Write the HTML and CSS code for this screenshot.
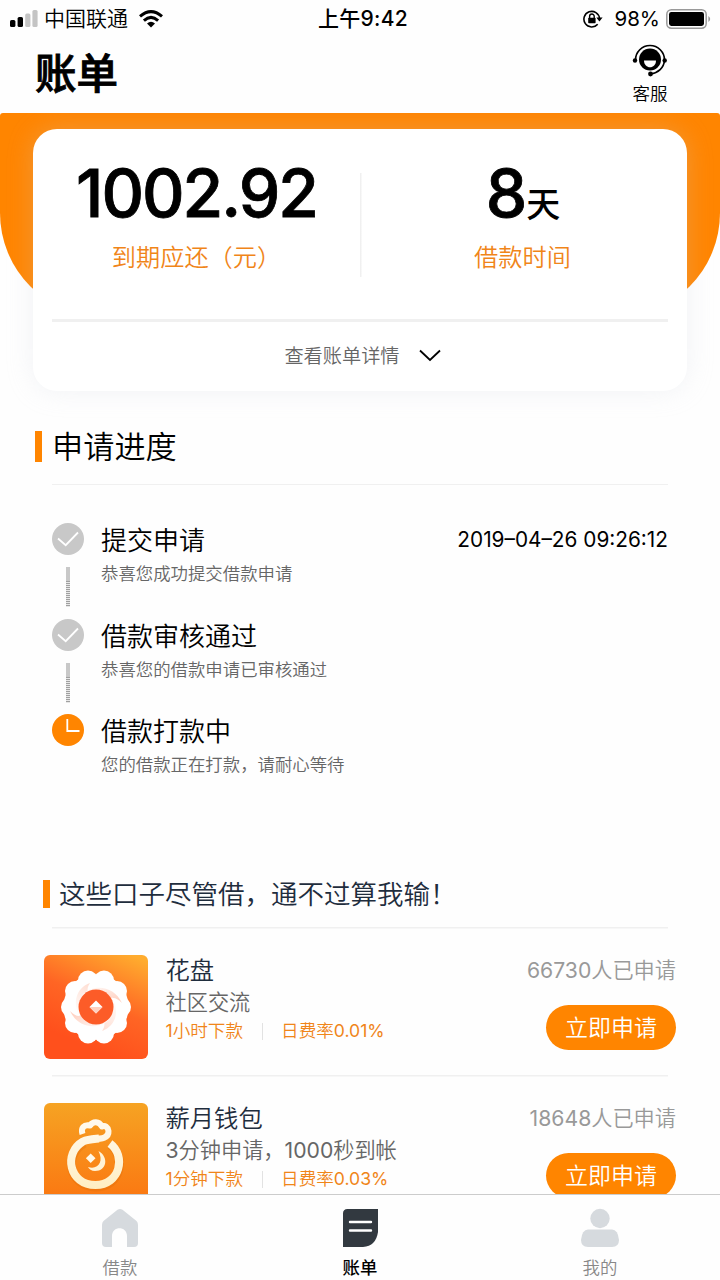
FILE: index.html
```html
<!DOCTYPE html>
<html lang="zh-CN">
<head>
<meta charset="utf-8">
<title>账单</title>
<link rel="stylesheet" href="styles.css">
</head>
<body>
<div class="status">
  <div class="status-left">
    <svg class="signal" width="30" height="18" viewBox="0 0 30 18"><rect x="1" y="10" width="5.4" height="7" rx="1.6"/><rect x="8.6" y="7" width="5.4" height="10" rx="1.6"/><g fill="#c4c4c4"><rect x="16.2" y="3.5" width="5.2" height="13.5" rx="1.6"/><rect x="23.4" y="0" width="5.2" height="17" rx="1.6"/></g></svg>
    <span>中国联通</span>
    <svg class="wifi" width="24" height="18" viewBox="0 0 24 18"><g fill="none" stroke="#000" stroke-width="3"><path d="M1 6.4Q12-3.2 23 6.4"/><path d="M4.9 10.6Q12 4.2 19.1 10.6"/></g><path d="M8 13.4Q12 10 16 13.4L12 17.4Z"/></svg>
  </div>
  <div class="status-time">上午9:42</div>
  <div class="status-right">
    <svg width="20" height="18" viewBox="0 0 20 18"><path d="M14.7 14.2A7.8 7.8 0 1 1 16.5 8.5" fill="none" stroke="#000" stroke-width="1.6"/><path d="M13.3 7.6H19.6L16.4 11.6Z"/><rect x="5.2" y="7.7" width="7.4" height="5.5" rx=".7"/><path d="M6.6 8V6.3a2.3 2.3 0 0 1 4.6 0V8" fill="none" stroke="#000" stroke-width="1.4"/></svg>
    <span class="percent">98%</span>
    <svg width="45" height="20" viewBox="0 0 45 20"><rect x=".8" y=".8" width="39.4" height="18.4" rx="4.6" fill="none" stroke="#999" stroke-width="1.5"/><rect x="3" y="3" width="35" height="14" rx="2.4"/><path d="M42.4 7Q46 10 42.4 13Z" fill="#999"/></svg>
  </div>
</div>
<header class="header">
  <h1>账单</h1>
  <div class="service">
    <svg width="36" height="34" viewBox="0 0 36 34"><path d="M3.5 17A14.5 14.5 0 0 1 32.5 17C32 25 26 30 18.5 31" fill="none" stroke="#000" stroke-width="1.7"/><circle cx="18" cy="16.5" r="11"/><path d="M12 17.5H24C24 26.5 12 26.5 12 17.5Z" fill="#fff"/><circle cx="3" cy="17.5" r="2.2"/><circle cx="32.7" cy="17.5" r="2.2"/><circle cx="18.5" cy="31" r="2.4"/></svg>
    <span>客服</span>
  </div>
</header>
<main class="main">
  <section class="hero">
    <div class="card">
      <div class="figures">
        <div class="figure"><div class="amount">1002.92</div><div class="caption">到期应还（元）</div></div>
        <div class="figure figure-days"><div class="amount days">8<span class="unit">天</span></div><div class="caption">借款时间</div></div>
      </div>
      <div class="details"><span>查看账单详情</span><svg width="22" height="13" viewBox="0 0 22 13"><path d="M1 1.5L11 11L21 1.5" fill="none" stroke="#000" stroke-width="1.8"/></svg></div>
    </div>
  </section>
  <section class="progress">
    <h2>申请进度</h2>
    <ol class="steps">
      <li><div class="mark"><svg width="32" height="32" viewBox="0 0 32 32"><circle cx="16" cy="16" r="16" fill="#c8c8c8"/><path d="M6 15.5L13.7 22.2L26 9.5" fill="none" stroke="#fff" stroke-width="1.8"/></svg><i></i></div><div class="step-text"><h3>提交申请</h3><p>恭喜您成功提交借款申请</p></div><time>2019–04–26 09:26:12</time></li>
      <li><div class="mark"><svg width="32" height="32" viewBox="0 0 32 32"><circle cx="16" cy="16" r="16" fill="#c8c8c8"/><path d="M6 15.5L13.7 22.2L26 9.5" fill="none" stroke="#fff" stroke-width="1.8"/></svg><i></i></div><div class="step-text"><h3>借款审核通过</h3><p>恭喜您的借款申请已审核通过</p></div></li>
      <li><div class="mark"><svg width="32" height="32" viewBox="0 0 32 32"><circle cx="16" cy="16" r="16" fill="#ff8500"/><path d="M15.3 5V17H27.5" fill="none" stroke="#fff" stroke-width="1.8"/></svg></div><div class="step-text"><h3>借款打款中</h3><p>您的借款正在打款，请耐心等待</p></div></li>
    </ol>
  </section>
  <section class="offers">
    <h2 class="offers-title">这些口子尽管借，通不过算我输！</h2>
    <article class="offer">
      <svg class="logo" width="104" height="104" viewBox="0 0 104 104">
        <defs>
          <linearGradient id="sunset" x1=".85" y1="0" x2=".45" y2=".9"><stop stop-color="#ffac2e"/><stop offset=".55" stop-color="#ff6524"/><stop offset="1" stop-color="#ff501c"/></linearGradient>
          <linearGradient id="petal" x1="0" y1="0" x2="1" y2=".6"><stop stop-color="#fff"/><stop offset="1" stop-color="#ffd3c4"/></linearGradient>
          <linearGradient id="fold" x1=".6" y1="0" x2=".4" y2="1"><stop stop-color="#ffe0d5"/><stop offset="1" stop-color="#fff"/></linearGradient>
        </defs>
        <rect width="104" height="104" rx="6" fill="url(#sunset)"/>
        <g fill="#fff"><circle cx="52" cy="52" r="32.7"/><circle cx="60" cy="25.5" r="10"/><circle cx="44" cy="25.5" r="10"/><circle cx="31" cy="36" r="10"/><circle cx="27" cy="52" r="10"/><circle cx="31" cy="68" r="10"/><circle cx="44" cy="78.5" r="10"/><circle cx="60" cy="78.5" r="10"/><circle cx="73" cy="68" r="10"/><circle cx="77" cy="52" r="10"/><circle cx="73" cy="36" r="10"/></g>
        <path d="M36 62C28 48 32 33 46 28C41 35 46 37 42 44Z" fill="url(#fold)"/>
        <path d="M38 40C50 28 70 31 78 48C72 42 68 42 66 45Z" fill="url(#petal)"/>
        <g transform="rotate(180 52 52)"><path d="M36 62C28 48 32 33 46 28C41 35 46 37 42 44Z" fill="url(#fold)"/><path d="M38 40C50 28 70 31 78 48C72 42 68 42 66 45Z" fill="url(#petal)"/></g>
        <circle cx="52" cy="52" r="17.5" fill="#fc5c28"/><path d="M52 45.5L58.5 52L52 58.5L45.5 52Z" fill="#fff"/><path d="M45.5 52H58.5L52 58.5Z" fill="#ffd0c0"/>
      </svg>
      <div class="offer-info"><h3>花盘</h3><p class="desc">社区交流</p><p class="terms"><span>1小时下款</span><i></i><span>日费率0.01%</span></p></div>
      <div class="offer-side"><p>66730人已申请</p><button>立即申请</button></div>
    </article>
    <article class="offer">
      <svg class="logo" width="104" height="104" viewBox="0 0 104 104">
        <defs>
          <linearGradient id="amber" x1="0" y1="0" x2="0" y2="1"><stop stop-color="#f6a323"/><stop offset="1" stop-color="#fb7410"/></linearGradient>
          <linearGradient id="cream" gradientUnits="userSpaceOnUse" x1="0" y1="17" x2="0" y2="86"><stop stop-color="#fffaf0"/><stop offset="1" stop-color="#ffeec2"/></linearGradient>
        </defs>
        <rect width="104" height="104" rx="6" fill="url(#amber)"/>
        <path d="M66 41C82 54 76 83 51.5 83C25 83 18 51 40 39" fill="none" stroke="#d96a05" stroke-opacity=".3" stroke-width="9" transform="translate(.5 1)"/>
        <g fill="none" stroke="url(#cream)" stroke-linejoin="round">
          <path d="M66 40.5C82.5 53 76 82 51.5 82C25 82 19 50 39 38.5C44 36 49 36 55 35.5" stroke-width="8"/>
          <path d="M49 36C58 36 65 35 64.5 28C64 24 61 22 58 23.5C55 18 49 18 46 22.500000C40 21 36.500000 25 38.500000 31" stroke-width="6"/>
        </g>
        <path d="M46.7 50.5L51.5 55.3L46.7 60.1L41.9 55.3Z" fill="#fff9e8"/><path d="M54.5 48C65 54 63 68 51 68C47.5 68 45 66 44 64C54 67 60 59 54.5 48Z" fill="#fff3d6"/>
      </svg>
      <div class="offer-info"><h3>薪月钱包</h3><p class="desc">3分钟申请，1000秒到帐</p><p class="terms"><span>1分钟下款</span><i></i><span>日费率0.03%</span></p></div>
      <div class="offer-side"><p>18648人已申请</p><button>立即申请</button></div>
    </article>
  </section>
</main>
<nav class="tabs">
  <a><svg width="38" height="40" viewBox="0 0 38 40"><path d="M16.5 1.8Q19 0 21.5 1.8L35.5 13Q37 14.5 37 17V35Q37 39 33 39H26V28C26 17.5 11 17.5 11 28V39H5Q1 39 1 35V17Q1 14.5 2.5 13Z" fill="#d6dade"/></svg><span>借款</span></a>
  <a class="active"><svg width="38" height="40" viewBox="0 0 38 40"><path d="M2 39V5.5Q2 1 6.5 1H37V24Q35 38 22 39Z" fill="#323940"/><path d="M9 14H30M9 22.5H30" stroke="#fff" stroke-width="2.4" stroke-linecap="round"/></svg><span>账单</span></a>
  <a><svg width="38" height="40" viewBox="0 0 38 40"><circle cx="19" cy="10.5" r="9.7" fill="#d6dade"/><path d="M7 21.5H31Q37 21.5 38 32Q38 39 31 39H7Q0 39 0 32Q1 21.5 7 21.5Z" fill="#d6dade"/></svg><span>我的</span></a>
</nav>
</body>
</html>
```
FILE: styles.css
```css
* { box-sizing: border-box; margin: 0; padding: 0; }
body {
  width: 720px; height: 1280px; overflow: hidden;
  display: flex; flex-direction: column;
  background: #fefefe; color: #000;
  font-family: Inter, "Noto Sans CJK SC DemiLight", "Noto Sans CJK SC", sans-serif;
}
h1, h2, h3 { font-weight: 400; }
svg { display: block; flex: none; }
i { display: block; }

.status-time, .header h1, .unit, .tabs .active { font-family: Inter, "Noto Sans CJK SC", sans-serif; font-weight: 500; }

.status { flex: none; height: 36px; display: grid; grid-template-columns: 1fr auto 1fr; align-items: center; padding: 0 9px 0 9px; font-size: 21px; line-height: 37px; }
.status-left { display: flex; align-items: center; gap: 5px; }
.wifi { margin-left: 6px; }
.status-time { letter-spacing: .3px; padding-left: 6px; }
.status-right { display: flex; align-items: center; justify-content: flex-end; }
.percent { margin: 0 6px 0 11px; font-size: 20.5px; }

.header { flex: none; height: 77px; display: flex; justify-content: space-between; padding: 0 52px 0 35px; }
.header h1 { font-size: 41.5px; line-height: 77px; -webkit-text-stroke: .9px #000; }
.service { display: flex; flex-direction: column; align-items: center; padding-top: 7px; font-size: 17.5px; line-height: 34px; }

.main { flex: 1; min-height: 0; overflow: hidden; }
.hero { height: 204px; padding: 16px 33px 0; background: #ff8500; border-radius: 3px 3px 104px 104px; }
.card { height: 262px; padding: 0 19px; background: #fff; border-radius: 24px; box-shadow: 0 0 26px rgba(205, 208, 220, .26); }
.figures { height: 193px; display: grid; grid-template-columns: 1fr 1fr; border-bottom: 3px solid #f0f0f0; }
.figure { height: 148px; padding-top: 29px; text-align: center; }
.figure:first-child { padding-right: 19px; }
.figure-days { padding-left: 17px; background: linear-gradient(#f0f0f0, #f0f0f0) 0 44px / 1.5px 104px no-repeat; }
.amount { height: 72px; font-size: 66px; font-weight: 500; line-height: 71px; letter-spacing: -2px; -webkit-text-stroke: .8px #000; white-space: nowrap; }
.days { letter-spacing: -1px; }
.unit { font-size: 34px; -webkit-text-stroke: 0; }
.caption { margin-top: 9px; font-size: 24.2px; line-height: 37px; color: #f08519; white-space: nowrap; }
.details { height: 66px; display: flex; align-items: center; justify-content: center; gap: 19px; padding-left: 5px; font-size: 19.2px; color: #666; }

.progress { padding: 110px 52px 0; }
.progress h2 { height: 57px; margin-left: -17px; padding-left: 17px; font-size: 31.2px; line-height: 40px; background: linear-gradient(#ff8500, #ff8500) 0 4px / 7px 31px no-repeat; }
.steps { list-style: none; border-top: 1.5px solid #f0f0f0; padding-top: 38px; height: 395px; }
.steps li { height: 95.6px; display: flex; }
.mark { width: 32px; margin-right: 17px; display: flex; flex-direction: column; align-items: center; gap: 12px; }
.mark i { width: 4px; height: 40px; background: linear-gradient(#c8c8c8, #c8c8c8) 0 0 / 4px 14px no-repeat, repeating-linear-gradient(#a0a0a0 0 1px, #e8e8e8 1px 2px); }
.step-text h3 { font-size: 26px; line-height: 35px; }
.step-text p { font-size: 17.4px; line-height: 32px; color: #666; }
.steps time { margin-left: auto; font-size: 20.8px; line-height: 33px; }

.offers { padding: 0 52px; }
.offers-title { height: 48px; margin-left: -9px; padding-left: 16px; font-size: 26.5px; line-height: 30px; color: #1f2d3d; white-space: nowrap; background: linear-gradient(#ff8500, #ff8500) 0 1px / 7px 28px no-repeat; }
.offer { height: 148px; display: flex; margin: 0 -9px 0 -8px; padding-top: 28px; background: linear-gradient(#f0f0f0, #f0f0f0) 8px 0 / 616px 1.5px no-repeat; }
.offer-info { margin-left: 17.5px; white-space: nowrap; }
.offer-info h3 { font-size: 24.3px; line-height: 30px; color: #1f2d3d; }
.desc { font-size: 21.2px; line-height: 34px; color: #666; }
.terms { display: flex; align-items: center; font-size: 17.6px; line-height: 24px; color: #f08519; }
.terms i { width: 1px; height: 17px; margin: 0 18.5px; background: #e2e2e2; }
.offer-side { margin-left: auto; display: flex; flex-direction: column; align-items: flex-end; padding-right: 1px; font-size: 21.2px; line-height: 30px; color: #999; white-space: nowrap; }
.offer-side button { width: 130px; height: 45px; margin-top: 20px; padding-top: 1px; border: 0; border-radius: 23px; background: #ff8500; color: #fff; font: inherit; font-size: 23px; line-height: 44px; }

.tabs { flex: none; height: 86px; display: grid; grid-template-columns: repeat(3, 1fr); border-top: 1px solid #ccc; background: #fefefe; }
.tabs a { display: flex; flex-direction: column; align-items: center; padding-top: 13px; font-size: 17.4px; line-height: 40px; color: #888; }
.tabs .active { color: #000; }
```
